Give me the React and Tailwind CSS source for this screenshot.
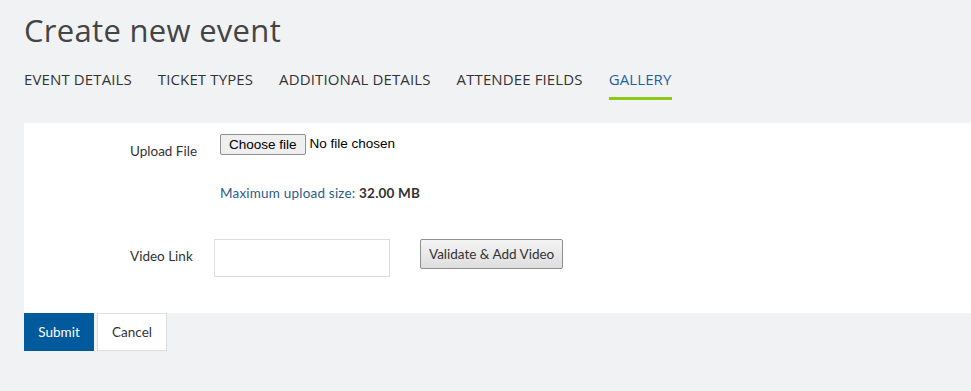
export default function App() {
  const tabs = ["EVENT DETAILS", "TICKET TYPES", "ADDITIONAL DETAILS", "ATTENDEE FIELDS", "GALLERY"];
  return (
    <div className="w-[971px] h-[391px] bg-[#f1f2f4] overflow-hidden" style={{ fontFamily: "Lato, 'Noto Sans', sans-serif" }}>
      <div className="pl-6">
        <h1 className="pt-[11px] text-[31px] leading-[38px] text-[#444] tracking-[0.3px]" style={{ fontFamily: "'Open Sans', sans-serif" }}>
          Create new event
        </h1>
        <div className="flex gap-[26px] mt-[20px] h-[31px]" style={{ fontFamily: "'Open Sans', sans-serif" }}>
          {tabs.map((t) => (
            <div key={t} className={"text-[15px] leading-[20px] pb-[8px] tracking-[0.12px] " + (t === "GALLERY" ? "text-[#1f5fa3] border-b-[3px] border-[#8cc919]" : "text-[#333]")}>
              {t}
            </div>
          ))}
        </div>
        <div className="mt-[23px] bg-white h-[190px] text-[13.5px] text-[#333]">
          <div className="flex pt-[11px]">
            <div className="w-[196px] pl-[106px] pt-[7px]">Upload File</div>
            <div>
              <div className="flex items-center" style={{ fontFamily: "'Liberation Sans', Arial, sans-serif" }}>
                <div className="h-[21px] px-[8px] border border-[#8f8f8f] rounded-[2px] bg-[#efefef] text-[13.5px] text-black leading-[19px]">Choose file</div>
                <span className="ml-[4px] text-[13.5px] text-black">No file chosen</span>
              </div>
              <div className="mt-[28px] text-[#2c5c88] tracking-[0.2px]">
                Maximum upload size: <span className="font-bold text-[#333]">32.00 MB</span>
              </div>
            </div>
          </div>
          <div className="flex mt-[36px]">
            <div className="w-[190px] pl-[106px] pt-[7px]">Video Link</div>
            <div className="w-[176px] h-[38px] border border-[#dcdcdc] bg-white"></div>
            <div className="ml-[30px] h-[30px] px-[8px] border border-[#8f8f8f] rounded-[2px] bg-gradient-to-b from-[#f4f4f4] to-[#dedede] leading-[28px] text-[#333] text-[13.5px]">
              Validate &amp; Add Video
            </div>
          </div>
        </div>
        <div className="flex gap-[3px] text-[13.5px]">
          <div className="w-[70px] h-[38px] bg-[#005a9c] text-white flex items-center justify-center">Submit</div>
          <div className="w-[70px] h-[38px] bg-white border border-[#dedede] text-[#333] flex items-center justify-center">Cancel</div>
        </div>
      </div>
    </div>
  );
}
